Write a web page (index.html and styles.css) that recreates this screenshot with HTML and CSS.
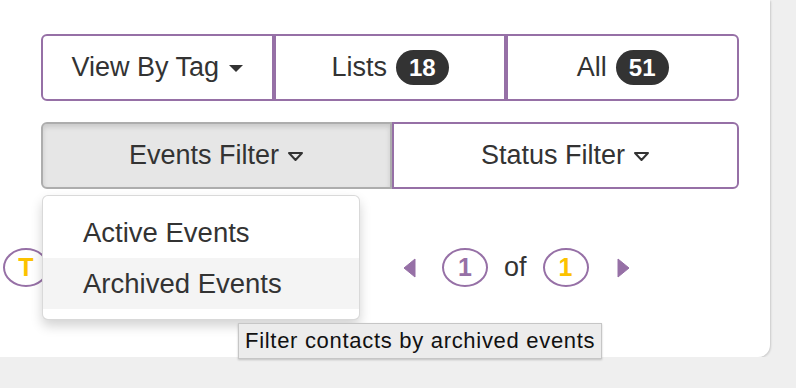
FILE: index.html
```html
<!DOCTYPE html>
<html lang="en">

<head>
    <meta charset="UTF-8">
    <meta name="viewport" content="width=device-width, initial-scale=1.0">
    <title>Contacts</title>
    <link rel="stylesheet" href="styles.css">
</head>

<body>
    <section class="card">
        <div class="btn-group">
            <button class="btn"><span>View By Tag</span><span class="caret"></span></button>
            <button class="btn"><span>Lists</span><span class="badge">18</span></button>
            <button class="btn"><span>All</span><span class="badge">51</span></button>
        </div>

        <div class="btn-group filters">
            <div class="dropdown">
                <button class="btn active"><span>Events Filter</span><svg class="caret-line" width="17" height="11" viewBox="0 0 17 11"><path d="M2 2 H15 L8.5 9 Z" fill="none" stroke="#333" stroke-width="2" stroke-linejoin="round" /></svg></button>
                <ul class="dropdown-menu">
                    <li>Active Events</li>
                    <li class="hover">Archived Events</li>
                </ul>
            </div>
            <button class="btn"><span>Status Filter</span><svg class="caret-line" width="17" height="11" viewBox="0 0 17 11"><path d="M2 2 H15 L8.5 9 Z" fill="none" stroke="#333" stroke-width="2" stroke-linejoin="round" /></svg></button>
        </div>

        <div class="pager-row">
            <span class="pill gold">T</span>
            <div class="pages">
                <svg class="arrow" width="13" height="20" viewBox="0 0 13 20">
                    <path d="M12 1 L1 10 L12 19 Z" fill="#9670a6" stroke="#9670a6" stroke-width="1" stroke-linejoin="round" />
                </svg>
                <span class="pill purple">1</span>
                <span class="of">of</span>
                <span class="pill gold">1</span>
                <svg class="arrow next" width="13" height="20" viewBox="0 0 13 20">
                    <path d="M1 1 L12 10 L1 19 Z" fill="#9670a6" stroke="#9670a6" stroke-width="1" stroke-linejoin="round" />
                </svg>
            </div>
        </div>
    </section>

    <div class="tooltip">Filter contacts by archived events</div>
</body>

</html>
```

FILE: styles.css
```css
body {
    margin: 0;
    padding: 0;
    background-color: #efefef;
    font-family: "Liberation Sans", Arial, sans-serif;
    color: #333;
}

.card {
    position: relative;
    width: 770px;
    height: 357px;
    box-sizing: border-box;
    padding: 34px 31px 0 41px;
    background-color: #fff;
    border-bottom-right-radius: 12px;
    box-shadow: 1px 1px 2px rgba(0, 0, 0, 0.15);
}

.btn-group {
    display: flex;
    height: 67px;
}

.btn-group > .btn,
.btn-group > .dropdown {
    flex: 1;
}

.btn-group > * + * {
    margin-left: -1px;
}

.btn {
    width: 100%;
    height: 67px;
    box-sizing: border-box;
    margin: 0;
    padding: 0;
    display: flex;
    justify-content: center;
    align-items: center;
    background-color: #fff;
    border: 2px solid #9670a6;
    border-radius: 0;
    font-family: inherit;
    font-size: 27px;
    color: #333;
}

.btn-group > :first-child,
.btn-group > :first-child .btn {
    border-top-left-radius: 6px;
    border-bottom-left-radius: 6px;
}

.btn-group > :last-child {
    border-top-right-radius: 6px;
    border-bottom-right-radius: 6px;
}

.filters {
    margin-top: 21px;
}

.filters .dropdown {
    flex: 0 0 351px;
}

.btn.active {
    position: relative;
    z-index: 1;
    background-color: #e6e6e6;
    border-color: #adadad;
    box-shadow: inset 0 3px 5px rgba(0, 0, 0, 0.125);
}

.caret {
    display: inline-block;
    margin-left: 10px;
    margin-top: 1px;
    border-top: 7px solid #333;
    border-left: 7px solid transparent;
    border-right: 7px solid transparent;
}

.caret-line {
    margin-left: 8px;
    margin-top: 1px;
}

.badge {
    display: inline-block;
    height: 35px;
    line-height: 36px;
    padding: 0 13px;
    margin-left: 9px;
    border-radius: 18px;
    background-color: #333;
    color: #fff;
    font-size: 24px;
    font-weight: bold;
}

.dropdown {
    position: relative;
}

.dropdown-menu {
    position: absolute;
    top: 73px;
    left: 1px;
    z-index: 5;
    width: 318px;
    height: 125px;
    box-sizing: border-box;
    margin: 0;
    padding: 11px 0;
    list-style: none;
    background-color: #fff;
    border: 1px solid rgba(0, 0, 0, 0.15);
    border-radius: 6px;
    box-shadow: 0 6px 12px rgba(0, 0, 0, 0.175);
}

.dropdown-menu li {
    height: 51px;
    line-height: 51px;
    padding-left: 40px;
    font-size: 27.5px;
    color: #333;
}

.dropdown-menu li.hover {
    background-color: #f4f4f4;
}

.pager-row {
    display: flex;
    align-items: center;
    height: 39px;
    margin: 59px 0 0 -38px;
}

.pill {
    width: 46px;
    height: 39px;
    box-sizing: border-box;
    display: flex;
    justify-content: center;
    align-items: center;
    border: 2px solid #9670a6;
    border-radius: 50%;
    font-size: 25px;
    font-weight: bold;
}

.pill.gold {
    color: #fcc200;
}

.pill.purple {
    color: #9670a6;
}

.pages {
    display: flex;
    align-items: center;
    margin-left: 354px;
}

.pages .arrow {
    margin-right: 26px;
}

.pages .arrow.next {
    margin: 0 0 0 28px;
}

.of {
    margin: 0 16px;
    font-size: 27px;
}

.tooltip {
    position: absolute;
    top: 323px;
    left: 238px;
    z-index: 10;
    width: 364px;
    height: 36px;
    box-sizing: border-box;
    padding-left: 6px;
    background-color: #ececec;
    border: 1px solid #c6c6c6;
    box-shadow: 0 1px 2px rgba(0, 0, 0, 0.2);
    font-size: 22px;
    line-height: 34px;
    letter-spacing: 0.7px;
    color: #111;
    white-space: nowrap;
}
```
